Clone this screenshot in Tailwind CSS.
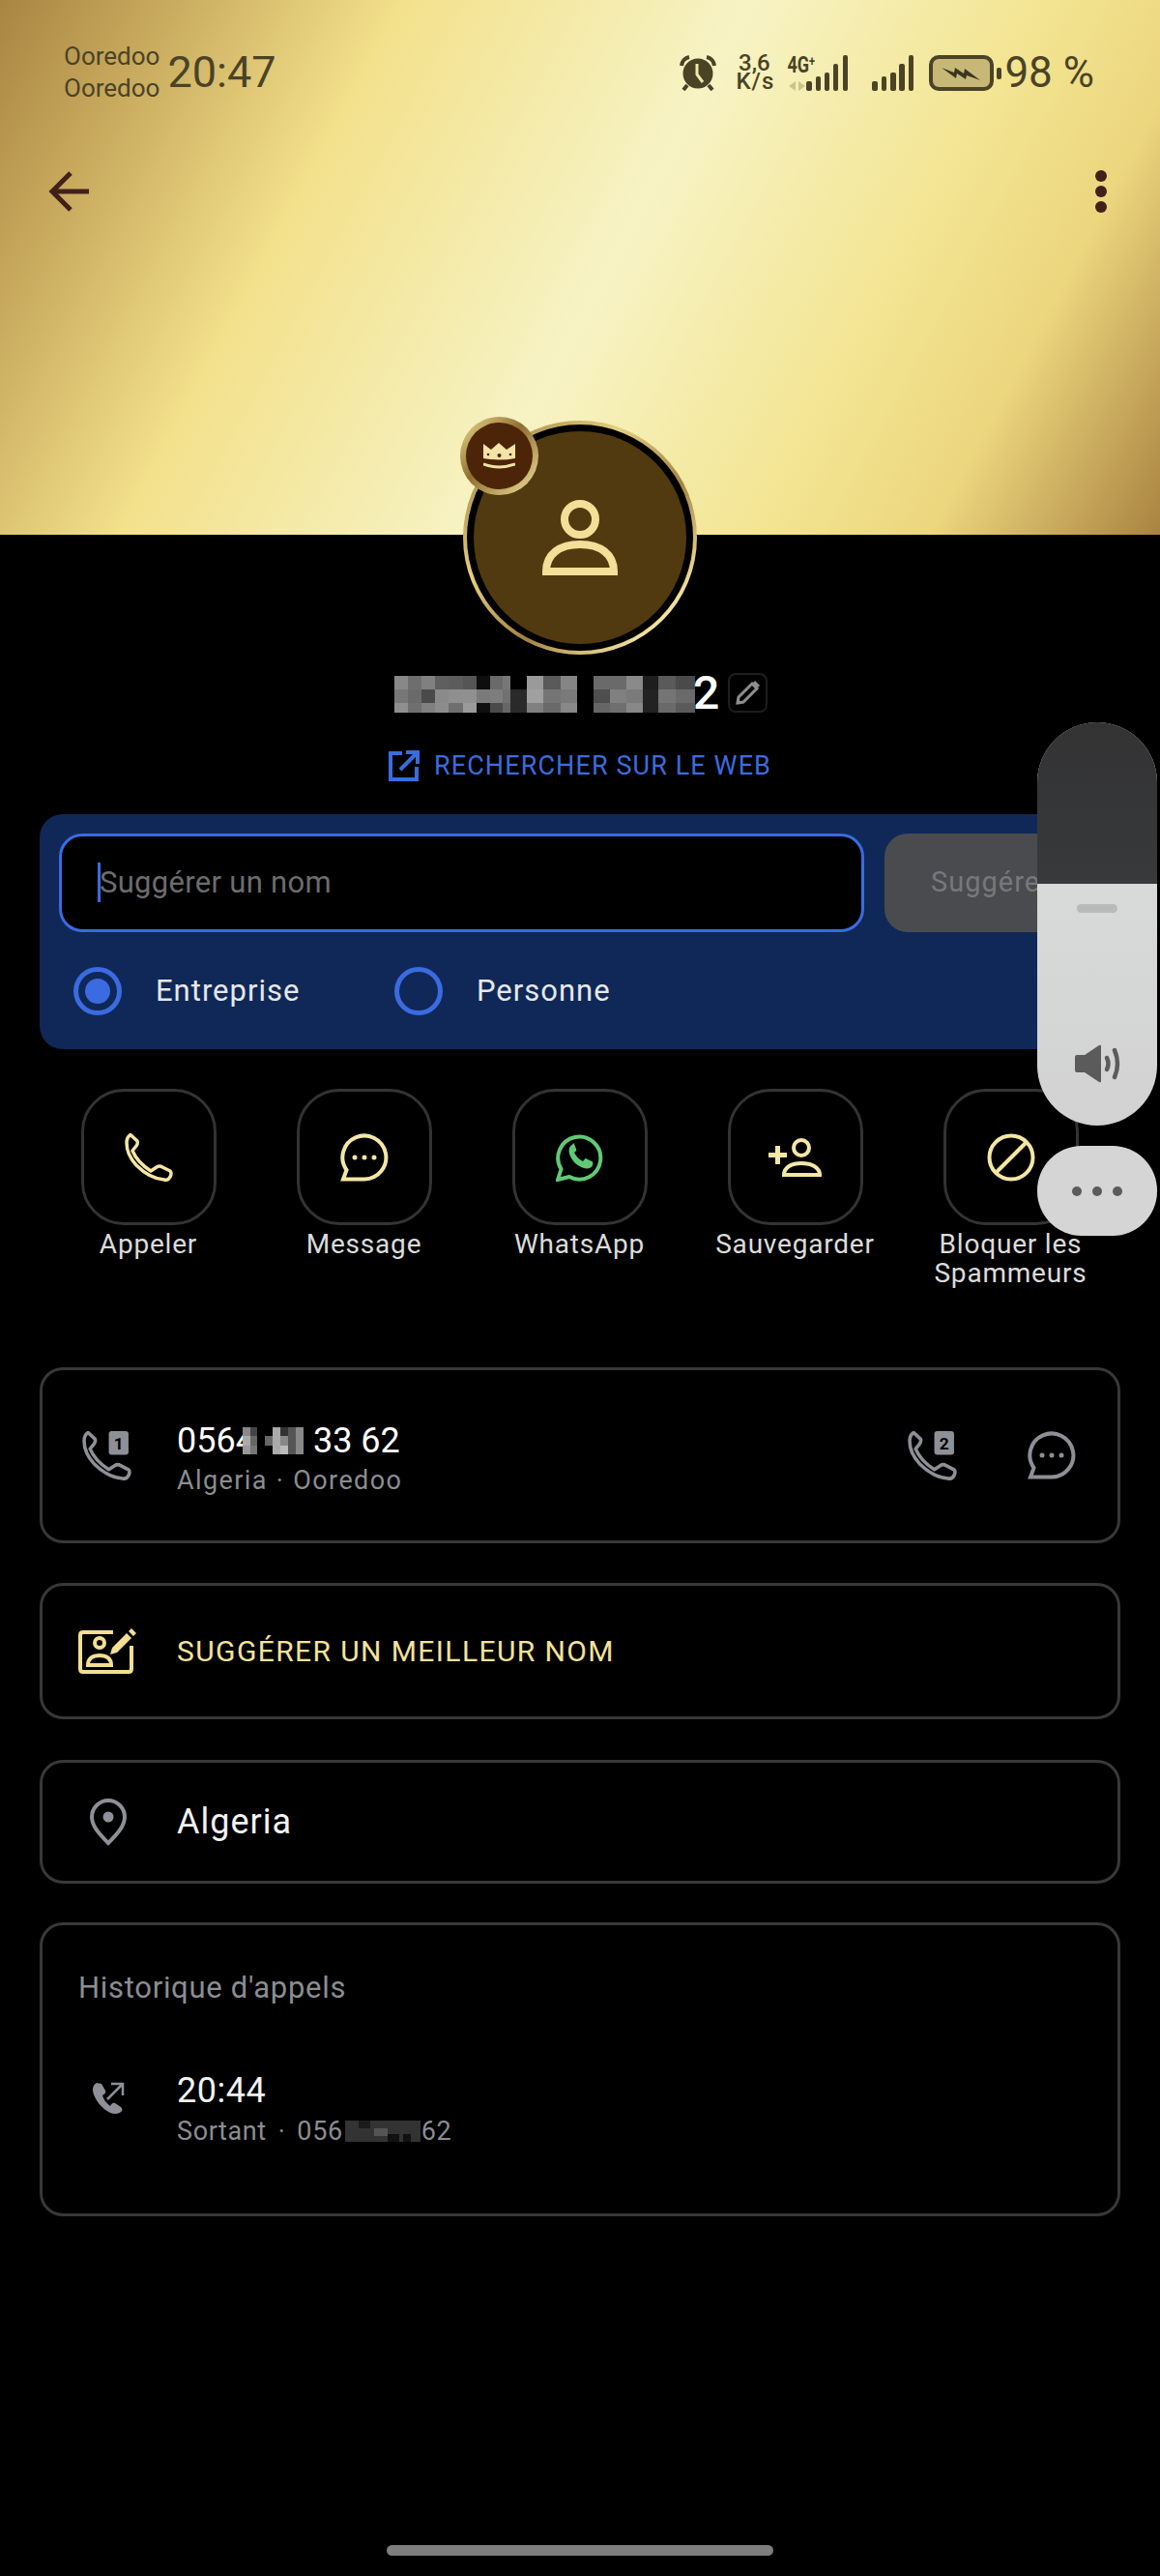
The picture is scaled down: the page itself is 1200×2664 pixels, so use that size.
<!DOCTYPE html>
<html lang="fr">
<head>
    <meta charset="UTF-8">
    <meta name="viewport" content="width=device-width, initial-scale=1.0">
    <title>Fiche contact</title>
    <script src="https://cdn.jsdelivr.net/npm/@tailwindcss/browser@4"></script>
</head>
<body class="bg-black font-['Roboto',sans-serif]">
<div class="relative w-[1200px] h-[2664px] overflow-hidden bg-black">

    <!-- en-tete or -->
    <header class="h-[553px] bg-[linear-gradient(118deg,#a98542_0%,#c9ab5e_12%,#f3e18c_28%,#f5efb8_47%,#f7f3c4_52%,#f3e593_72%,#ecd67e_84%,#a98340_100%)]">
        <div class="flex items-center justify-between pl-[66px] pr-[68px] pt-[42px] text-[#4a4326]">
            <div class="flex items-center gap-[8px]">
                <div class="flex flex-col text-[26px] leading-[33px]"><span>Ooredoo</span><span>Ooredoo</span></div>
                <span class="text-[45px] leading-[44px]">20:47</span>
            </div>
            <div class="flex items-center">
                <svg class="w-[38px] h-[38px]" viewBox="0 0 38 38" fill="none" stroke="#4a4326" stroke-width="4"><circle cx="19" cy="20" r="15.500" fill="#4a4326" stroke="none"/><path d="M2 12A10 10 0 0 1 10 3M36 12A10 10 0 0 0 28 3M8 32l-4 5M30 32l4 5"/><path d="M18 10v11l6 8" stroke="#f3e9a8" stroke-width="3"/></svg>
                <div class="ml-[20px] w-[38px] text-[24px] leading-[19px] text-center font-medium flex flex-col"><span>3,6</span><span class="tracking-[1px]">K/s</span></div>
                <div class="relative ml-[15px] w-[63px] h-[37px]">
                    <span class="absolute left-0 top-0 origin-top-left scale-y-[1.35] text-[18px] leading-[14px] font-bold">4G<sup class="text-[11px] top-[-5px]">+</sup></span>
                    <svg class="w-[63px] h-[37px]" viewBox="0 0 63 37" fill="#4a4326"><path d="M2 32l7-5v10zM19 32l-7 5V27z" opacity=".25"/><rect x="20" y="27" width="6" height="10" rx="2"/><rect x="30" y="22" width="5" height="15" rx="2"/><rect x="39" y="18" width="5" height="19" rx="2"/><rect x="48" y="9" width="5" height="28" rx="2"/><rect x="58" y="0" width="5" height="37" rx="2"/></svg>
                </div>
                <svg class="ml-[25px] w-[43px] h-[37px]" viewBox="0 0 43 37" fill="#4a4326"><rect x="0" y="27" width="6" height="10" rx="2"/><rect x="10" y="22" width="5" height="15" rx="2"/><rect x="19" y="18" width="6" height="19" rx="2"/><rect x="28" y="9" width="6" height="28" rx="2"/><rect x="38" y="0" width="5" height="37" rx="2"/></svg>
                <svg class="ml-[16px] w-[75px] h-[37px]" viewBox="0 0 75 37"><rect x="2" y="2" width="63" height="33" rx="8" fill="#c8b877" stroke="#4a4326" stroke-width="4"/><rect x="70" y="13" width="5" height="12" rx="2" fill="#4a4326"/><path d="M13 13l13 5 1-5 9 6 1-5 16 12-14-5-1 4-9-6-1 5z" fill="#3b3520"/></svg>
                <span class="ml-[3px] text-[44px] leading-[44px]">98 %</span>
            </div>
        </div>
        <div class="flex items-center justify-between pl-[50px] pr-[55px] pt-[68px]">
            <svg class="w-[42px] h-[42px]" viewBox="0 0 42 42" fill="none" stroke="#42201a" stroke-width="5"><path d="M42 21H5M23 2 4 21l19 19"/></svg>
            <div class="flex flex-col gap-[4px]"><i class="block w-[12px] h-[12px] rounded-full bg-[#42201a]"></i><i class="block w-[12px] h-[12px] rounded-full bg-[#42201a]"></i><i class="block w-[12px] h-[12px] rounded-full bg-[#42201a]"></i></div>
        </div>
    </header>

    <!-- avatar -->
    <div class="absolute left-[479px] top-[435px] w-[242px] h-[242px] rounded-full bg-[linear-gradient(135deg,#8e6f30,#e5cf7f_35%,#a38340_60%,#f4e3a0_85%)] flex items-center justify-center">
        <div class="w-[234px] h-[234px] rounded-full bg-black flex items-center justify-center">
            <div class="w-[220px] h-[220px] rounded-full bg-[#523a10] flex items-center justify-center">
                <svg class="w-[78px] h-[78px]" viewBox="0 0 78 78" fill="none" stroke="#f3df97" stroke-width="8"><circle cx="39" cy="20" r="16"/><path d="M4 74c0-18 14-28 35-28s35 10 35 28z"/></svg>
            </div>
        </div>
    </div>
    <div class="absolute left-[476px] top-[431px] w-[81px] h-[81px] rounded-full bg-[linear-gradient(135deg,#f0dc90,#8e6f30_45%,#f4e3a0)] flex items-center justify-center">
        <div class="w-[69px] h-[69px] rounded-full bg-[#4c2408] flex items-center justify-center">
            <svg class="w-[33px] h-[27px]" viewBox="0 0 33 27"><path d="M0 1l8 6 8-7 8 7 9-6v15q-16 3-33 0z" fill="#f3e3a4"/><path d="M0 22q16 6 33 0" stroke="#f3e3a4" stroke-width="3" fill="none"/><circle cx="5" cy="12" r="1.300" fill="#4c2408"/><circle cx="16.500" cy="13" r="2" fill="#4c2408"/><circle cx="28" cy="12" r="1.300" fill="#4c2408"/></svg>
        </div>
    </div>

    <main class="absolute left-0 top-[696px] w-[1200px]">
        <!-- nom floute -->
        <div class="flex items-center h-[41px] pl-[408px]">
            <svg id="name-mosaic" class="w-[311px] h-[38px] mt-[3px]" viewBox="143 897 932 113" shape-rendering="crispEdges"></svg>
            <span class="-ml-[2px] text-[48px] leading-[41px] text-white font-medium">2</span>
            <div class="ml-[9px] w-[41px] h-[41px] rounded-[8px] border-[2px] border-[#1e1e1e] flex items-center justify-center">
                <svg class="w-[27px] h-[27px]" viewBox="0 0 27 27" fill="none" stroke="#8e8e8e" stroke-width="3"><path d="M3 24l1-6L18 4l5 5L9 23zM20 2l5 5"/></svg>
            </div>
        </div>
        <!-- lien web -->
        <div class="flex items-center justify-center mt-[39px] gap-[15px] text-[#3b6cde]">
            <svg class="w-[32px] h-[32px]" viewBox="0 0 32 32" fill="none" stroke="#3b6cde" stroke-width="4"><path d="M14 3H2v27h27V17M18 2h12v12M30 2 12 20"/></svg>
            <span class="text-[27px] leading-[32px] tracking-[1.1px]">RECHERCHER SUR LE WEB</span>
        </div>

        <!-- suggestion -->
        <section class="ml-[41px] mt-[34px] w-[1118px] h-[243px] rounded-[24px] bg-[#102857] overflow-hidden pl-[20px] pt-[20px]">
            <div class="flex gap-[21px]">
                <div class="relative w-[833px] h-[102px] rounded-[24px] border-[3px] border-[#3a6be0] bg-black flex items-center pl-[39px]">
                    <i class="absolute left-[37px] top-[27px] w-[3px] h-[41px] bg-[#3a6be0]"></i>
                    <span class="text-[31px] tracking-[.3px] text-[#6c6c6e]">Suggérer un nom</span>
                </div>
                <div class="w-[220px] h-[102px] rounded-[24px] bg-[#4a4b4e] pl-[48px] flex items-center text-[29px] tracking-[1px] text-[#77787b]">Suggérer</div>
            </div>
            <div class="flex items-center mt-[36px] pl-[15px] text-[31px] tracking-[1px] text-[#e6e8ec]">
                <div class="w-[50px] h-[50px] rounded-full border-[5px] border-[#3a6be0] flex items-center justify-center"><i class="block w-[26px] h-[26px] rounded-full bg-[#3a6be0]"></i></div>
                <span class="ml-[35px] w-[247px]">Entreprise</span>
                <div class="w-[50px] h-[50px] rounded-full border-[5px] border-[#3a6be0]"></div>
                <span class="ml-[35px]">Personne</span>
            </div>
        </section>

        <!-- actions -->
        <nav class="flex pl-[42px] mt-[41px] h-[288px] text-[28px] leading-[30px] tracking-[.8px] text-[#dcdcdc]">
            <div class="w-[223px] flex flex-col items-center">
                <div class="w-[140px] h-[141px] rounded-[44px] border-[3px] border-[#333] flex items-center justify-center">
                    <svg class="w-[50px] h-[50px]" viewBox="0 0 50 50" fill="none" stroke="#f4e7a4" stroke-width="3.500" stroke-linejoin="round"><path d="M6 1.500 13 8q1 2-1 5l-4 5q5 12 19 21l6-4q3-2 6 0l8 4q2 2 0 6-2 4-6 3-15-1-29-15Q2 22 2 10 2 4 6 1.500z"/></svg>
                </div>
                <span class="mt-[5px] text-center">Appeler</span>
            </div>
            <div class="w-[223px] flex flex-col items-center">
                <div class="w-[140px] h-[141px] rounded-[44px] border-[3px] border-[#333] flex items-center justify-center">
                    <svg class="w-[50px] h-[50px]" viewBox="0 0 50 50" fill="none" stroke="#f4e7a4" stroke-width="4"><path d="M3 47.500 6.500 38A22.500 22.500 0 1 1 25 47.500z"/><circle cx="15" cy="25" r="2.500" fill="#f4e7a4" stroke="none"/><circle cx="25" cy="25" r="2.500" fill="#f4e7a4" stroke="none"/><circle cx="35" cy="25" r="2.500" fill="#f4e7a4" stroke="none"/></svg>
                </div>
                <span class="mt-[5px] text-center">Message</span>
            </div>
            <div class="w-[223px] flex flex-col items-center">
                <div class="w-[140px] h-[141px] rounded-[44px] border-[3px] border-[#333] flex items-center justify-center">
                    <svg class="w-[50px] h-[50px]" viewBox="0 0 50 50"><path d="M2 48l3.500-11A22 22 0 1 1 14 45z" fill="none" stroke="#61c975" stroke-width="4"/><path d="M17 12c-3 1-4 5-3 9 2 7 8 13 15 15 4 1 8 0 9-3 1-2 0-4-1-4l-6-3c-1 0-2 2-3 3-4-2-7-5-9-9 1-1 3-2 2-4l-2-5c-1-1-1-1-2 1z" fill="#61c975"/></svg>
                </div>
                <span class="mt-[5px] text-center">WhatsApp</span>
            </div>
            <div class="w-[223px] flex flex-col items-center">
                <div class="w-[140px] h-[141px] rounded-[44px] border-[3px] border-[#333] flex items-center justify-center">
                    <svg class="w-[55px] h-[40px]" viewBox="0 0 55 40" fill="none" stroke="#f4e7a4" stroke-width="4"><circle cx="34" cy="10" r="8"/><path d="M16 38c0-8 8-12 18-12s19 4 19 12z"/><path d="M0 17.500h19M9.500 8v19" stroke-width="5"/></svg>
                </div>
                <span class="mt-[5px] text-center">Sauvegarder</span>
            </div>
            <div class="w-[223px] flex flex-col items-center">
                <div class="w-[140px] h-[141px] rounded-[44px] border-[3px] border-[#333] flex items-center justify-center">
                    <svg class="w-[50px] h-[50px]" viewBox="0 0 50 50" fill="none" stroke="#f4e7a4" stroke-width="4"><circle cx="25" cy="25" r="22.500"/><path d="M9 41 41 9"/></svg>
                </div>
                <span class="mt-[5px] text-center">Bloquer les<br>Spammeurs</span>
            </div>
        </nav>

        <!-- numero -->
        <section class="ml-[41px] w-[1118px] h-[182px] rounded-[24px] border-[3px] border-[#383838] flex items-center pl-[41px] pr-[43px]">
            <svg class="w-[51px] h-[51px]" viewBox="0 0 50 50"><path d="M6 1.500 13 8q1 2-1 5l-4 5q5 12 19 21l6-4q3-2 6 0l8 4q2 2 0 6-2 4-6 3-15-1-29-15Q2 22 2 10 2 4 6 1.500z" fill="none" stroke="#8d9096" stroke-width="3.500" stroke-linejoin="round"/><rect x="27" y="0" width="20" height="24" rx="3" fill="#8d9096"/><text x="37" y="18.500" text-anchor="middle" font-size="17" font-weight="700" fill="#000" font-family="Roboto">1</text></svg>
            <div class="ml-[47px] pt-[6px]">
                <div class="flex items-center text-[36px] leading-[42px] text-white"><span>056</span><span>4</span>
                    <svg class="-ml-[13px] w-[63px] h-[28px]" viewBox="0 0 63 28" shape-rendering="crispEdges"><rect x="0" y="0" width="8" height="9" fill="#888"/><rect x="0" y="9" width="8" height="10" fill="#aaa"/><rect x="0" y="19" width="8" height="9" fill="#999"/><rect x="8" y="0" width="7" height="9" fill="#444"/><rect x="8" y="9" width="7" height="10" fill="#666"/><rect x="8" y="19" width="7" height="9" fill="#777"/><rect x="23" y="9" width="8" height="10" fill="#666"/><rect x="31" y="0" width="8" height="28" fill="#aaa"/><rect x="39" y="0" width="8" height="9" fill="#333"/><rect x="39" y="9" width="8" height="10" fill="#888"/><rect x="39" y="19" width="8" height="9" fill="#bbb"/><rect x="47" y="0" width="8" height="28" fill="#555"/><rect x="55" y="0" width="8" height="28" fill="#888"/></svg>
                    <span class="ml-[10px]">33 62</span></div>
                <div class="mt-[4px] flex text-[27px] leading-[32px] text-[#8b8d92] tracking-[1.400px]"><span>Algeria</span><span class="mx-[9px]">·</span><span>Ooredoo</span></div>
            </div>
            <div class="ml-auto flex items-center gap-[73px]">
                <svg class="w-[51px] h-[51px]" viewBox="0 0 50 50"><path d="M6 1.500 13 8q1 2-1 5l-4 5q5 12 19 21l6-4q3-2 6 0l8 4q2 2 0 6-2 4-6 3-15-1-29-15Q2 22 2 10 2 4 6 1.500z" fill="none" stroke="#8d9096" stroke-width="3.500" stroke-linejoin="round"/><rect x="27" y="0" width="20" height="24" rx="3" fill="#8d9096"/><text x="37" y="18.500" text-anchor="middle" font-size="17" font-weight="700" fill="#000" font-family="Roboto">2</text></svg>
                <svg class="w-[50px] h-[50px]" viewBox="0 0 50 50" fill="none" stroke="#8d9096" stroke-width="4"><path d="M3 47.500 6.500 38A22.500 22.500 0 1 1 25 47.500z"/><circle cx="15" cy="25" r="2.500" fill="#8d9096" stroke="none"/><circle cx="25" cy="25" r="2.500" fill="#8d9096" stroke="none"/><circle cx="35" cy="25" r="2.500" fill="#8d9096" stroke="none"/></svg>
            </div>
        </section>

        <!-- suggerer un nom -->
        <section class="ml-[41px] mt-[41px] w-[1118px] h-[141px] rounded-[24px] border-[3px] border-[#383838] flex items-center pl-[37px]">
            <svg class="w-[60px] h-[47px]" viewBox="0 0 60 47" fill="none" stroke="#f2df92" stroke-width="4"><path d="M36 4H5Q2 4 2 7v35q0 3 3 3h47q3 0 3-3V18"/><circle cx="22" cy="15" r="5"/><path d="M10 38c0-7 5-10 12-10s12 3 12 10z"/><path d="M33 27l2-7L50 5l5 5-15 15zM52 3l3-3 5 5-3 3z" fill="#f2df92" stroke="none"/></svg>
            <span class="ml-[42px] text-[30px] tracking-[1.400px] text-[#f4e39a]">SUGGÉRER UN MEILLEUR NOM</span>
        </section>

        <!-- pays -->
        <section class="ml-[41px] mt-[42px] w-[1118px] h-[128px] rounded-[24px] border-[3px] border-[#383838] flex items-center pl-[47px]">
            <svg class="w-[42px] h-[50px]" viewBox="0 0 42 50" fill="none" stroke="#8d9096" stroke-width="4"><path d="M21 47C11 37 4 29 4 20a17 17 0 0 1 34 0c0 9-7 17-17 27z"/><circle cx="21" cy="20" r="5.500" fill="#8d9096" stroke="none"/></svg>
            <span class="ml-[50px] text-[36px] tracking-[1px] text-[#f2f2f2]">Algeria</span>
        </section>

        <!-- historique -->
        <section class="ml-[41px] mt-[40px] w-[1118px] h-[304px] rounded-[24px] border-[3px] border-[#383838] pl-[37px] pt-[47px]">
            <div class="text-[31px] leading-[36px] tracking-[.7px] text-[#8b8d92]">Historique d'appels</div>
            <div class="flex items-start mt-[67px] pl-[14px]">
                <svg class="mt-[12px] w-[34px] h-[34px]" viewBox="0 0 34 34"><path d="M5 1C1 3 0 8 2 13c3 8 9 15 17 19 5 2 10 1 12-2 1-2 0-3-1-4l-6-4c-2-1-4 1-5 3-4-3-7-7-8-11 2-1 4-3 3-5L10 2z" fill="#8d9096"/><path d="M16 18 31 3M20 2h12v12" fill="none" stroke="#8d9096" stroke-width="2.500"/></svg>
                <div class="ml-[54px]">
                    <div class="text-[36px] leading-[42px] tracking-[.5px] text-[#f2f2f2]">20:44</div>
                    <div class="flex items-center mt-[3px] text-[27px] leading-[36px] tracking-[.6px] text-[#8b8d92]"><span>Sortant</span><span class="mx-[12px]">·</span><span>056</span>
                        <svg class="ml-[2px] w-[78px] h-[22px]" viewBox="0 0 78 22" shape-rendering="crispEdges"><rect x="0" y="0" width="78" height="22" fill="#333"/><rect x="14" y="0" width="12" height="8" fill="#1c1c1c"/><rect x="30" y="8" width="14" height="8" fill="#555"/><rect x="44" y="14" width="12" height="8" fill="#111"/><rect x="60" y="14" width="8" height="8" fill="#111"/></svg>
                        <span class="ml-[1px]">62</span></div>
                </div>
            </div>
        </section>
    </main>

    <!-- panneau volume -->
    <div class="absolute left-[1073px] top-[747px] w-[124px] h-[417px] rounded-[62px] overflow-hidden bg-[linear-gradient(#dcdede,#d2d2d2)]">
        <div class="h-[167px] bg-[linear-gradient(#333334,#38393b)]"></div>
        <div class="mx-auto mt-[21px] w-[42px] h-[9px] rounded-full bg-[#b9b9b9]"></div>
        <svg class="mx-auto mt-[136px] w-[48px] h-[40px]" viewBox="0 0 48 40" fill="#5b5b5b"><path d="M1 13q0-2 2-2h8L26 1q2-1 2 1v36q0 2-2 1L11 29H3q-2 0-2-2z"/><path d="M34 14q3 6 0 12" fill="none" stroke="#5b5b5b" stroke-width="4.500" stroke-linecap="round"/><path d="M42 6q6 14 0 28" fill="none" stroke="#5b5b5b" stroke-width="4.500" stroke-linecap="round"/></svg>
    </div>
    <div class="absolute left-[1073px] top-[1185px] w-[124px] h-[93px] rounded-[46px] bg-[#d5d5d5] flex items-center justify-center gap-[11px]">
        <i class="block w-[10px] h-[10px] rounded-full bg-[#5b5b5b]"></i><i class="block w-[10px] h-[10px] rounded-full bg-[#5b5b5b]"></i><i class="block w-[10px] h-[10px] rounded-full bg-[#5b5b5b]"></i>
    </div>

    <!-- barre home -->
    <div class="absolute left-[400px] top-[2632px] w-[400px] h-[11px] rounded-full bg-[#7e7e7e]"></div>
</div>

<script>
    // pixels du nom masque : x de depart, largeur, puis les trois gris de la colonne
    const nameBlocks = [
        [143,43,'#888','#777','#8f8f8f'],[186,42,'#6e6e6e','#6a6a6a','#6f6f6f'],[228,42,'#808080','#4a4a4a','#808080'],
        [270,42,'#5f5f5f','#8a8a8a','#8c8c8c'],[312,43,'#5c5c5c','#8f8f8f','#6f6f6f'],[355,42,'#555','#909090','#9a9a9a'],
        [397,43,'#0e0e0e','#7a7a7a','#0f0f0f'],[440,40,'#6a6a6a','#7d7d7d','#4a4a4a'],[480,23,'#777','#707070','#666'],
        [503,52,'#000','#2a2a2a','#2a2a2a'],[555,50,'#9a9a9a','#a0a0a0','#808080'],[605,53,'#5a5a5a','#757575','#6a6a6a'],[658,50,'#858585','#7a7a7a','#888'],
        [760,50,'#6a6a6a','#4e4e4e','#666'],[810,52,'#6a6a6a','#808080','#6f6f6f'],[862,50,'#8a8a8a','#7a7a7a','#888'],
        [912,50,'#1e1e1e','#222','#222'],[962,52,'#5a5a5a','#757575','#6a6a6a'],[1014,61,'#4a4a4a','#6a6a6a','#5a5a5a']
    ];
    const rows = [[897,43],[940,40],[980,30]];
    document.getElementById('name-mosaic').innerHTML = nameBlocks.map(b =>
        rows.map((r, i) => `<rect x="${b[0]}" y="${r[0]}" width="${b[1]}" height="${r[1]}" fill="${b[i + 2]}"/>`).join('')
    ).join('');
</script>
</body>
</html>
